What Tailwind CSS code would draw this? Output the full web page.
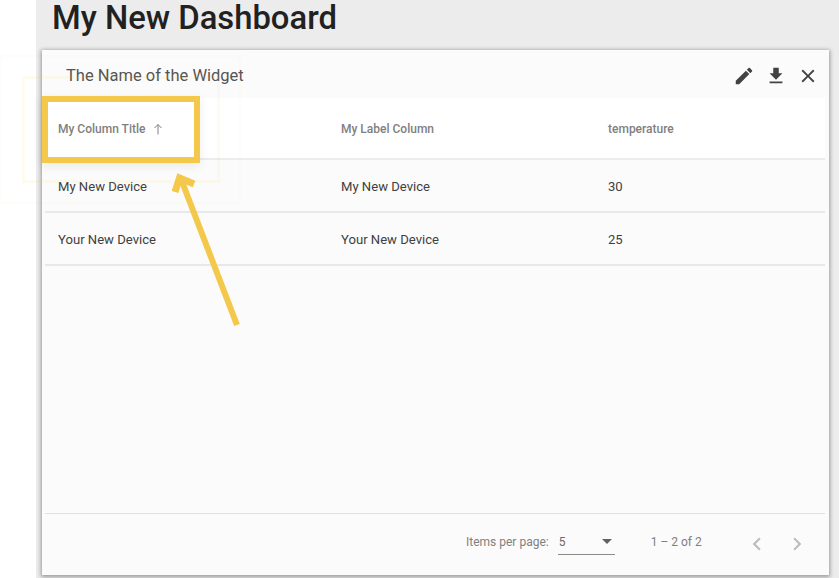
<!DOCTYPE html>
<html lang="en">
<head>
  <meta charset="UTF-8">
  <script src="https://cdn.jsdelivr.net/npm/@tailwindcss/browser@4"></script>
  <title>My New Dashboard</title>
</head>
<body class="bg-white overflow-hidden font-['Roboto',sans-serif]">
  <div class="relative w-[839px] h-[578px] overflow-hidden pl-[36px]">
    <!-- dashboard area -->
    <main class="h-full bg-[#ececec] pl-[6px] pr-[10px]">
      <h1 class="h-[50px] pl-[10px] pt-[1px] text-[32.800px] leading-[35px] font-medium text-[#212121]">My New Dashboard</h1>

      <!-- widget card -->
      <section class="h-[525px] bg-[#fbfbfb] flex flex-col shadow-[0_1px_4px_1px_rgba(0,0,0,0.35)]">
        <header class="h-[48px] shrink-0 flex items-center pl-[24px] pr-[10px] pt-[4px]">
          <h2 class="text-[16.500px] text-[#545454] grow">The Name of the Widget</h2>
          <div class="flex items-center gap-[10px] text-[#424242]">
            <svg class="w-[22px] h-[22px]" viewBox="0 0 24 24" fill="currentColor"><path d="M3 17.25V21h3.75L17.81 9.94l-3.75-3.75L3 17.25zM20.71 7.04a1 1 0 0 0 0-1.41l-2.34-2.34a1 1 0 0 0-1.41 0l-1.83 1.83 3.75 3.75 1.83-1.83z"/></svg>
            <svg class="w-[22px] h-[22px]" viewBox="0 0 24 24" fill="currentColor"><path d="M19 9h-4V3H9v6H5l7 7 7-7zM5 18v2h14v-2H5z"/></svg>
            <svg class="w-[22px] h-[22px]" viewBox="0 0 24 24" fill="currentColor"><path d="M19 6.41 17.59 5 12 10.59 6.41 5 5 6.41 10.59 12 5 17.59 6.41 19 12 13.41 17.59 19 19 17.59 13.41 12z"/></svg>
          </div>
        </header>

        <!-- table -->
        <div class="ml-[3px] mr-[4px] grow">
          <div class="h-[62px] pt-[1px] bg-white border-b-[2px] border-[#ececec] grid grid-cols-[283px_267px_1fr] items-center pl-[13px] text-[12px] font-medium text-[#808080]">
            <div class="flex items-center gap-[7px]">
              My Column Title
              <svg class="w-[12px] h-[12px]" viewBox="0 0 12 12" fill="none" stroke="currentColor" stroke-width="1"><path d="M6 11.500V1.500M2.500 5 6 1.500 9.500 5"/></svg>
            </div>
            <div>My Label Column</div>
            <div>temperature</div>
          </div>
          <div class="h-[53px] pt-[2px] border-b-[2px] border-[#e8e8e8] grid grid-cols-[283px_267px_1fr] items-center pl-[13px] text-[13.100px] text-[#3f3f3f]">
            <div>My New Device</div>
            <div>My New Device</div>
            <div>30</div>
          </div>
          <div class="h-[53px] pt-[2px] border-b-[2px] border-[#e8e8e8] grid grid-cols-[283px_267px_1fr] items-center pl-[13px] text-[13.100px] text-[#3f3f3f]">
            <div>Your New Device</div>
            <div>Your New Device</div>
            <div>25</div>
          </div>
        </div>

        <!-- paginator -->
        <footer class="h-[62px] shrink-0 ml-[3px] mr-[4px] border-t border-[#e0e0e0] flex items-center pb-[5px] text-[12px] text-[#808080] pl-[421px]">
          <span>Items per page:</span>
          <div class="ml-[9px] w-[57px] h-[26px] pl-[1px] border-b border-[#8a8a8a] flex items-center justify-between pr-[3px] text-[#6a6a6a]">
            <span>5</span>
            <span class="w-0 h-0 border-x-[5px] border-x-transparent border-t-[5px] border-t-[#616161]"></span>
          </div>
          <span class="ml-[36px]">1 – 2 of 2</span>
          <svg class="ml-[42px] mt-[4px] w-[26px] h-[26px]" viewBox="0 0 24 24" fill="#bdbdbd"><path d="M15.41 7.41 14 6l-6 6 6 6 1.41-1.41L10.830 12z"/></svg>
          <svg class="ml-[14px] mt-[4px] w-[26px] h-[26px]" viewBox="0 0 24 24" fill="#bdbdbd"><path d="M10 6 8.590 7.410 13.170 12l-4.580 4.590L10 18l6-6z"/></svg>
        </footer>
      </section>
    </main>

    <!-- highlight over the column title -->
    <div class="absolute left-0 top-[55px] w-[241px] h-[149px] border-[2px] border-[#f4c84a]/3"></div>
    <div class="absolute left-[22px] top-[76px] w-[198px] h-[107px] border-[3px] border-[#f4c84a]/8"></div>
    <div class="absolute left-[42px] top-[96px] w-[158px] h-[67px] border-[6px] border-[#f4c84a] shadow-[0_3px_10px_rgba(0,0,0,0.08)]"></div>
    <svg class="absolute left-[165px] top-[165px]" width="80" height="165" viewBox="0 0 80 165" fill="none" stroke="#f4c84a" stroke-width="6">
      <path d="M72 160 16 14"/>
      <path d="M10 27 14.500 13 29 19" stroke-width="7"/>
    </svg>
  </div>
</body>
</html>
